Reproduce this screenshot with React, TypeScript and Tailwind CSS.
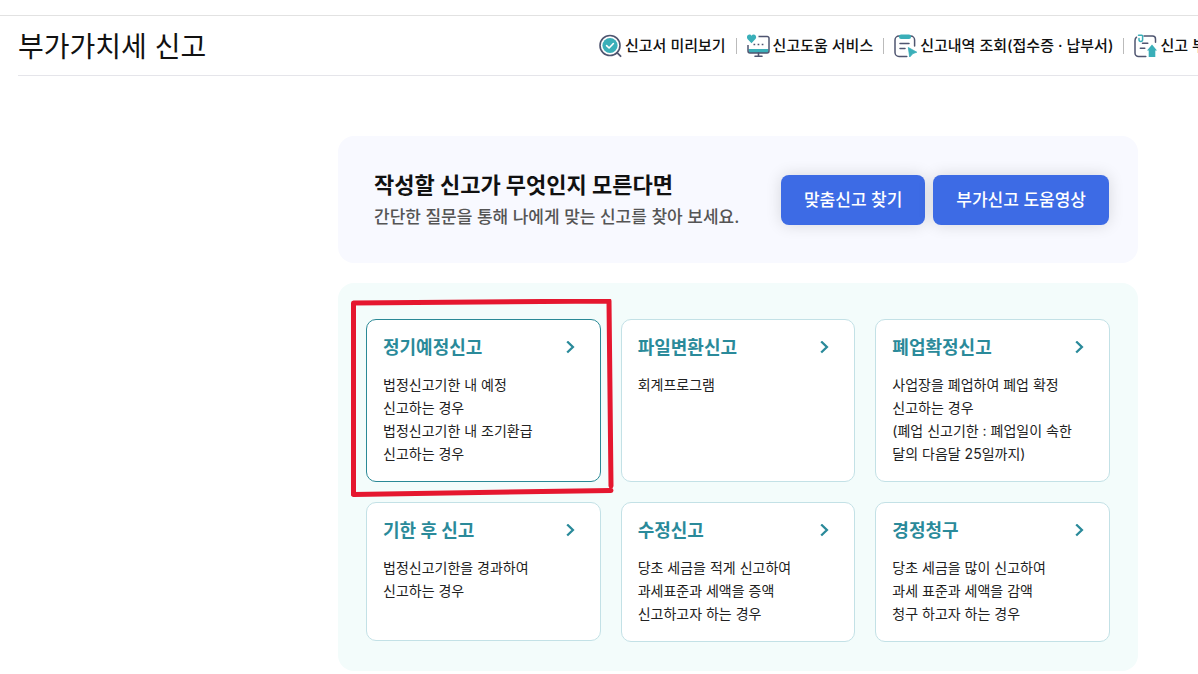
import type { ReactNode } from "react";

function PreviewIcon() {
  return (
    <svg className="h-6 w-6 shrink-0" viewBox="0 0 24 24" fill="none" aria-hidden="true">
      <circle cx="11" cy="11.5" r="10" stroke="#4f5570" strokeWidth="1.6" />
      <circle cx="11" cy="11.5" r="7.6" fill="#3aafb9" />
      <path d="M7.6 11.6l2.500 2.400 4.300-4.500" stroke="#fff" strokeWidth="1.600" strokeLinecap="round" strokeLinejoin="round" />
      <path d="M18 18.700l3.600 3.500" stroke="#4f5570" strokeWidth="1.800" strokeLinecap="round" />
    </svg>
  );
}

function HelpServiceIcon() {
  return (
    <svg className="h-6 w-6 shrink-0" viewBox="0 0 24 24" fill="none" aria-hidden="true">
      <path d="M1.500 15h20v2a2 2 0 0 1-2 2h-16a2 2 0 0 1-2-2z" fill="#3aafb9" />
      <path d="M11.500 2.500h8.700a1.800 1.800 0 0 1 1.800 1.800V17a2 2 0 0 1-2 2H3a2 2 0 0 1-2-2V11" stroke="#4f5570" strokeWidth="1.500" />
      <path d="M11.500 19v3M8 22.200h7" stroke="#4f5570" strokeWidth="1.600" strokeLinecap="round" />
      <path d="M4.500 9.200L.7 5.200C-.9 3.300.3.500 2.400.5c1 0 1.700.5 2.100 1.200C5 .9 5.700.5 6.700.5c2.100 0 3.300 2.700 1.700 4.600z" fill="#3aafb9" />
      <path d="M6.500 10.500h1.700M10.600 10.500h1.700M14.700 10.500h1.700" stroke="#4f5570" strokeWidth="1.700" />
    </svg>
  );
}

function HistoryIcon() {
  return (
    <svg className="h-6 w-6 shrink-0" viewBox="0 0 24 24" fill="none" aria-hidden="true">
      <path d="M12.800 22.500H5a4 4 0 0 1-4-4V6a4 4 0 0 1 4-4h11.600a4 4 0 0 1 4 4v6" stroke="#4f5570" strokeWidth="1.500" strokeLinecap="round" />
      <rect x="5" y="0.500" width="12" height="4.500" rx="2" fill="#3aafb9" />
      <path d="M6 9.500h9M6 14.500h5" stroke="#4f5570" strokeWidth="1.500" strokeLinecap="round" />
      <path d="M14.300 13.500l8.500 4.700-3.800 1.300-3.300 3.500z" fill="#3aafb9" stroke="#3aafb9" strokeWidth="0.800" strokeLinejoin="round" />
    </svg>
  );
}

function AttachmentIcon() {
  return (
    <svg className="h-6 w-6 shrink-0" viewBox="0 0 24 24" fill="none" aria-hidden="true">
      <path d="M11.800 22.500H4.500a3.500 3.500 0 0 1-3.500-3.500V6.500C1 5 1.500 4 2.500 3.200M10 2h8.500a3 3 0 0 1 3 3v3.200" stroke="#4f5570" strokeWidth="1.500" strokeLinecap="round" />
      <path d="M4.500 1.300h3.300c.5 0 .8.300.8.800v3.700c0 2.300-3.600 2.300-3.600 0V4.500" stroke="#3aafb9" strokeWidth="1.500" strokeLinecap="round" />
      <path d="M8.500 9.300h5.300M6.300 14.200h4.500" stroke="#4f5570" strokeWidth="1.500" strokeLinecap="round" />
      <path d="M18 10.500l5 6h-1.700V23h-6.600v-6.500H13z" fill="#3aafb9" />
    </svg>
  );
}

const links: { label: string; icon: ReactNode }[] = [
  { label: "신고서 미리보기", icon: <PreviewIcon /> },
  { label: "신고도움 서비스", icon: <HelpServiceIcon /> },
  { label: "신고내역 조회(접수증 · 납부서)", icon: <HistoryIcon /> },
  { label: "신고 부속서류", icon: <AttachmentIcon /> },
];

type Filing = { title: string; lines: string[]; selected?: boolean; compact?: boolean };

const filings: Filing[] = [
  {
    title: "정기예정신고",
    lines: ["법정신고기한 내 예정", "신고하는 경우", "법정신고기한 내 조기환급", "신고하는 경우"],
    selected: true,
  },
  { title: "파일변환신고", lines: ["회계프로그램"] },
  {
    title: "폐업확정신고",
    lines: ["사업장을 폐업하여 폐업 확정", "신고하는 경우", "(폐업 신고기한 : 폐업일이 속한", "달의 다음달 25일까지)"],
  },
  { title: "기한 후 신고", lines: ["법정신고기한을 경과하여", "신고하는 경우"], compact: true },
  { title: "수정신고", lines: ["당초 세금을 적게 신고하여", "과세표준과 세액을 증액", "신고하고자 하는 경우"] },
  { title: "경정청구", lines: ["당초 세금을 많이 신고하여", "과세 표준과 세액을 감액", "청구 하고자 하는 경우"] },
];

function HighlightFrame() {
  return (
    <svg
      className="pointer-events-none absolute -left-4 -top-5 h-[199px] w-[264px]"
      viewBox="0 0 264 199"
      fill="none"
      stroke="#e5172f"
      strokeWidth="5"
      strokeLinecap="round"
      strokeLinejoin="round"
      aria-hidden="true"
    >
      <path d="M3.500 195V4L259 2L261 187" />
      <path d="M3.500 195.500L261 191.500" />
    </svg>
  );
}

function FilingCard({ filing }: { filing: Filing }) {
  return (
    <div className={filing.compact ? "relative grid min-h-[139px] self-start" : "relative grid"}>
      <a
        href="#"
        className={
          filing.selected
            ? "block rounded-[10px] border border-[#2a8996] bg-white px-4 pb-4 pt-[14px]"
            : "block rounded-[10px] border border-[#c3e1e6] bg-white px-4 pb-4 pt-[14px]"
        }
      >
        <span className="flex items-center justify-between pr-[9px]">
          <strong className="text-[18px] font-bold leading-[27px] text-[#2a8a9a]">{filing.title}</strong>
          <svg className="h-[14px] w-[9px]" viewBox="0 0 9 14" fill="none" aria-hidden="true">
            <path d="M1.200 0.500L6.900 6L1.200 11.500" stroke="#2a8a9a" strokeWidth="2.300" />
          </svg>
        </span>
        <span className="mt-3 block whitespace-nowrap text-[14px] leading-[23px] text-[#222]">
          {filing.lines.map((line, i) => (
            <span key={i} className="block">
              {line}
            </span>
          ))}
        </span>
      </a>
      {filing.selected && <HighlightFrame />}
    </div>
  );
}

export default function App() {
  return (
    <div className="overflow-hidden bg-white pt-[15px] font-[Inter,'Noto_Sans_CJK_KR',sans-serif] text-[#111]">
      <header className="border-t border-[#e2e2e2]">
        <div className="grid grid-cols-2 items-center">
          <h1 className="pl-[18px] pt-1 text-[28px] font-normal leading-[55px]">부가가치세 신고</h1>
          <nav className="flex items-center overflow-hidden whitespace-nowrap">
            {links.map((link, i) => (
              <div key={link.label} className="flex shrink-0 items-center">
                {i > 0 && <span className="mx-[10px] h-4 w-px bg-[#bbb]" />}
                <a href="#" className="flex items-center gap-[2px] text-[15px] font-medium leading-6">
                  {link.icon}
                  {link.label}
                </a>
              </div>
            ))}
          </nav>
        </div>
        <div className="ml-[18px] h-px bg-[#e5e5ea]" />
      </header>

      <main className="ml-auto mr-[60px] mt-[60px] flex max-w-[800px] flex-col gap-5">
        <section className="flex items-center justify-between rounded-2xl bg-[#f8f9ff] pb-[31px] pl-9 pr-[29px] pt-8">
          <div>
            <h2 className="text-[22px] font-bold leading-[34px]">작성할 신고가 무엇인지 모른다면</h2>
            <p className="text-[17px] font-medium leading-[30px] text-[#555]">
              간단한 질문을 통해 나에게 맞는 신고를 찾아 보세요.
            </p>
          </div>
          <div className="flex gap-2 text-[17px] font-medium leading-[26px] text-white">
            <button
              type="button"
              className="rounded-lg bg-[#3d6be5] px-[23px] py-3 shadow-[0_0_16px_rgba(0,0,0,0.14)]"
            >
              맞춤신고 찾기
            </button>
            <button
              type="button"
              className="rounded-lg bg-[#3d6be5] px-[23px] py-3 shadow-[0_0_16px_rgba(0,0,0,0.14)]"
            >
              부가신고 도움영상
            </button>
          </div>
        </section>

        <section className="grid grid-cols-3 gap-5 rounded-2xl bg-[#f3fcfb] px-7 pb-[29px] pt-9">
          {filings.map((filing) => (
            <FilingCard key={filing.title} filing={filing} />
          ))}
        </section>
      </main>
    </div>
  );
}
